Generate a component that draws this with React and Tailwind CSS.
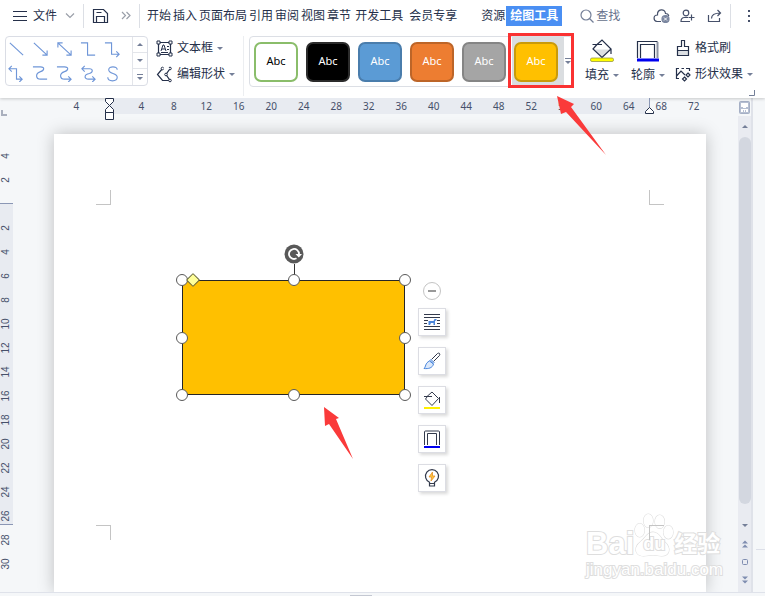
import clsx from 'clsx';

const mainTabs = ['开始', '插入', '页面布局', '引用', '审阅', '视图', '章节'];
const horizontalMarks = [4, '', 4, 8, 12, 16, 20, 24, 28, 32, 36, 40, 44, 48, 52, 56, 60, 64, 68, 72];
const verticalMarks = [4, 2, '', 2, 4, 6, 8, 10, 12, 14, 16, 18, 20, 22, 24, 26, 28, 30];

const swatches = [
  { name: 'green outline', style: 'bg-white border-[#8abd6a] text-black' },
  { name: 'black', style: 'bg-black border-[#2b2b2b] text-white' },
  { name: 'blue', style: 'bg-[#5b9bd5] border-[#4a7dac] text-white' },
  { name: 'orange', style: 'bg-[#ed7d31] border-[#bd6528] text-white' },
  { name: 'gray', style: 'bg-[#a5a5a5] border-[#858585] text-white' },
  { name: 'gold', style: 'bg-[#ffc000] border-[#c99a0a] text-white', selected: true },
];

const connectors = [
  { name: 'line', d: 'M2 2l14 13' },
  { name: 'arrow', d: 'M2 2l14 13M16 10v5h-5' },
  { name: 'double arrow', d: 'M2 2l14 13M16 10v5h-5M2 7V2h5' },
  { name: 'elbow', d: 'M1 2h7v13h8' },
  { name: 'elbow arrow', d: 'M1 2h7v12h8M13 11l3 3-3 3' },
  { name: 'elbow double arrow', d: 'M1 4h8v11h6M12 12l3 3-3 3M4 1L1 4l3 3' },
  { name: 'curve', d: 'M1 2h8c5 0 4 4 0 5-6 2-5 8 0 8h7' },
  { name: 'curve arrow', d: 'M1 2h8c5 0 4 4 0 5-6 2-5 8 0 8h7M13 12l3 3-3 3' },
  { name: 'curve double arrow', d: 'M2 4h8c4 0 4 4 0 5-6 1-6 6-1 6h7M13 12l3 3-3 3M5 1L2 4l3 3' },
  { name: 'freeform', d: 'M14 5c0-4-9-4-9 0 0 5 9 3 9 8 0 5-10 5-10 0' },
];

function Icon({ className, viewBox, children }) {
  return (
    <svg
      viewBox={viewBox}
      className={clsx('shrink-0', className)}
      fill="none"
      stroke="currentColor"
      strokeWidth="1.2"
      aria-hidden="true"
    >
      {children}
    </svg>
  );
}

function Caret({ up, bar }) {
  return (
    <svg viewBox="0 0 6 7" className="h-[7px] w-[6px] shrink-0" fill="#747f98" aria-hidden="true">
      {bar && <path d="M0 0h6v1H0z" />}
      <path d={up ? 'M0 5h6L3 2z' : bar ? 'M0 3h6L3 6z' : 'M0 2h6L3 5z'} />
    </svg>
  );
}

function Separator() {
  return <div className="h-6 w-px shrink-0 bg-[#dcdfe5]" />;
}

function MenuBar() {
  return (
    <header className="flex h-[31px] items-center whitespace-nowrap pl-3">
      <button type="button" className="flex items-center gap-1.5">
        <Icon viewBox="0 0 15 12" className="h-3 w-[15px]">
          <path d="M1 1.5h14M1 6.5h14M1 10.5h14" strokeWidth="1" />
        </Icon>
        文件
        <Icon viewBox="0 0 10 6" className="ml-0.5 h-[6px] w-[10px] text-[#9a9fa9]">
          <path d="M1 .5l4 4 4-4" />
        </Icon>
      </button>
      <div className="ml-2 flex items-center gap-2">
        <Separator />
        <button type="button" aria-label="save">
          <Icon viewBox="0 0 17 16" className="h-4 w-[17px]">
            <path d="M1.500 1.500h10l4 4v9h-14zM4.500 14.500v-6h8v6M4.500 4.500h5" />
          </Icon>
        </button>
        <button type="button" aria-label="more" className="ml-1">
          <Icon viewBox="0 0 10 9" className="h-[9px] w-[10px] text-[#9a9fa9]">
            <path d="M1 1l3.500 3.500L1 8M5.500 1L9 4.500 5.500 8" />
          </Icon>
        </button>
        <Separator />
      </div>
      <nav className="ml-[7px] flex items-center">
        <div className="flex gap-0.5">
          {mainTabs.map((tab) => (
            <button key={tab} type="button">{tab}</button>
          ))}
        </div>
        <button type="button" className="ml-1">开发工具</button>
        <button type="button" className="ml-1.5">会员专享</button>
        <button type="button" className="ml-6">资源</button>
        <button type="button" className="ml-px h-5 bg-[#4a8ff3] px-1 font-bold text-white">绘图工具</button>
      </nav>
      <label className="ml-[18px] flex items-center gap-0.5 text-[#747f98]">
        <Icon viewBox="0 0 14 14" className="size-[14px]">
          <circle cx="6" cy="6" r="5" />
          <path d="M9.500 9.500l4 4" />
        </Icon>
        <input
          type="text"
          placeholder="查找"
          aria-label="查找"
          className="w-7 bg-transparent outline-none placeholder:text-[#66718b]"
        />
      </label>
      <div className="ml-auto flex items-center pr-3.5 text-[#46506a]">
        <button type="button" aria-label="cloud">
          <Icon viewBox="0 0 17 15" className="h-[15px] w-[17px]">
            <path d="M8 13.500H4C0 13 0 7 4.500 7 4 1 12 0 12.500 5.500c2 0 3 1 3.300 2.500" />
            <circle cx="12.500" cy="11" r="3.500" fill="#7c87a0" stroke="#7c87a0" />
            <path d="M11 9.500l3 3m0-3l-3 3" stroke="#fff" strokeWidth="1" />
          </Icon>
        </button>
        <button type="button" aria-label="add user" className="ml-2.5">
          <Icon viewBox="0 0 15 14" className="h-[14px] w-[15px]">
            <circle cx="6" cy="4" r="2.800" />
            <path d="M8 8.500H4.500C2 8.500 1 10 1 12.500h9M11.500 5.500v6M8.500 8.500h6" />
          </Icon>
        </button>
        <button type="button" aria-label="share" className="ml-3">
          <Icon viewBox="0 0 15 14" className="h-[14px] w-[15px]">
            <path d="M1.500 6v6.500h11V9M4.500 9.500c0-4 3-5.500 9-5.500M10.500 1l3 3-3 3" />
          </Icon>
        </button>
        <div className="ml-2 flex items-center gap-4">
          <Separator />
          <button type="button" aria-label="options">
            <svg viewBox="0 0 4 13" className="h-[13px] w-1" fill="currentColor">
              <path d="M1 1h2v2H1zM1 6h2v2H1zM1 11h2v2H1z" />
            </svg>
          </button>
        </div>
      </div>
    </header>
  );
}

function BucketIcon({ className }) {
  return (
    <Icon viewBox="0 0 24 24" className={className}>
      <path d="M4 10.500h16l-8 8z" fill="#dcdfe3" stroke="none" />
      <path d="M2.500 5.500H12M6.500 6l5.500-5 9 9-9 8.500-9-8.500 3.500-4M21 10v5" />
      <rect x=".5" y="19" width="23" height="3.500" rx="1.500" fill="#ffff00" stroke="#8a8640" strokeWidth=".7" />
    </Icon>
  );
}

function OutlineIcon({ className }) {
  return (
    <Icon viewBox="0 0 24 24" className={className}>
      <path d="M1.500 19V2.500h20" />
      <path d="M21.500 3v16" stroke="#8c93a2" strokeWidth="2" />
      <path d="M4.500 19V5.500h14V19" />
      <path d="M1 21h22" stroke="#0000f0" strokeWidth="3" />
    </Icon>
  );
}

function ConnectorGallery() {
  return (
    <div className="flex h-[50px] rounded-sm border border-[#dadde5]">
      <div className="grid grid-cols-5">
        {connectors.map((c) => (
          <button key={c.name} type="button" aria-label={c.name} className="flex size-6 items-center pl-0.5 text-[#6f96d8]">
            <Icon viewBox="0 0 18 18" className="size-[17px]">
              <path d={c.d} />
            </Icon>
          </button>
        ))}
      </div>
      <div className="ml-1.5 grid w-[15px] grid-rows-3 divide-y divide-[#e3e5ea] border-l border-[#e3e5ea]">
        <button type="button" aria-label="up" className="flex items-center justify-center"><Caret up /></button>
        <button type="button" aria-label="down" className="flex items-center justify-center"><Caret /></button>
        <button type="button" aria-label="expand" className="flex items-center justify-center"><Caret bar /></button>
      </div>
    </div>
  );
}

function StyleGallery() {
  return (
    <div className="relative flex h-[51px] items-center rounded-sm border border-[#dcdfe5] pl-0.5">
      {swatches.map((s) => (
        <div key={s.name} className={clsx('flex h-full items-center pr-[5px] pl-0.5', s.selected && 'bg-[#dadde0]')}>
          <button
            type="button"
            aria-label={s.name}
            className={clsx('mr-px h-10 w-11 rounded-[7px] border-2 font-["Noto_Sans",sans-serif] text-[11px]', s.style)}
          >
            Abc
          </button>
        </div>
      ))}
      <button type="button" aria-label="more styles" className="flex w-2 justify-center"><Caret bar /></button>
      {/* highlight frame around the selected style */}
      <div className="absolute -top-1 -right-0.5 h-[55px] w-[66px] border-[3px] border-[#fa3232]" />
    </div>
  );
}

function Ribbon() {
  return (
    <div className="relative flex h-[67px] items-start whitespace-nowrap pt-[5px] pl-[5px]">
      <ConnectorGallery />
      <div className="ml-2 flex flex-col gap-0.5">
        <button type="button" className="flex h-6 items-center gap-1">
          <Icon viewBox="0 0 17 17" className="size-[17px]">
            <path d="M2.500 2.500h12v12h-12z" />
            <path d="M1 1h3v3H1zM13 1h3v3h-3zM1 13h3v3H1zM13 13h3v3h-3z" fill="#fff" strokeWidth="1" />
            <path d="M5 11l2-6h1l2 6M6 9h3M11 6.500h2M11 9.500h2M5 12.500h7" strokeWidth="1" />
          </Icon>
          文本框
          <Caret />
        </button>
        <button type="button" className="flex h-6 items-center gap-1">
          <Icon viewBox="0 0 17 17" className="size-[17px]">
            <path d="M6.500 2.500L1.500 8.500l5 6H14L10 8.500l4-6z" />
            <circle cx="6.500" cy="2.500" r="1.300" fill="#fff" strokeWidth="1" />
            <circle cx="14" cy="2.500" r="1.300" fill="#fff" strokeWidth="1" />
            <circle cx="14" cy="14.500" r="1.300" fill="#fff" strokeWidth="1" />
            <circle cx="10" cy="8.500" r="1.300" fill="#fff" strokeWidth="1" />
            <path d="M7.500 2.500H13" stroke="#fff" strokeWidth="2" />
          </Icon>
          编辑形状
          <Caret />
        </button>
      </div>
      <div className="ml-2 h-[60px] w-px bg-[#eceef1]" />
      <div className="ml-[5px]"><StyleGallery /></div>
      <div className="ml-3 flex gap-3 pt-[3px]">
        <button type="button" className="flex flex-col items-center gap-1">
          <BucketIcon className="size-6" />
          <span className="flex items-center gap-1">填充<Caret /></span>
        </button>
        <button type="button" className="flex flex-col items-center gap-1">
          <OutlineIcon className="size-6" />
          <span className="flex items-center gap-1">轮廓<Caret /></span>
        </button>
      </div>
      <div className="ml-2.5 flex flex-col gap-0.5">
        <button type="button" className="flex h-6 items-center gap-1">
          <Icon viewBox="0 0 16 18" className="h-[18px] w-4">
            <path d="M3 11h10v5H3z" fill="#dcdfe3" stroke="none" />
            <path d="M6.500 7.500v-6h3v6h4v9h-11v-9zM2.500 11.500h11" />
          </Icon>
          格式刷
        </button>
        <button type="button" className="flex h-6 items-center gap-1">
          <Icon viewBox="0 0 16 16" className="size-4">
            <path d="M4 2.500H1.500v10H4M11 2.500h3.500V5M1.500 10l4.500-5 4 4M6.500 2.500h2.500" />
            <path d="M13 7l2 2-2 2-2-2zM9.500 11l2 2-2 2-2-2z" fill="#fff" />
          </Icon>
          形状效果
          <Caret />
        </button>
      </div>
      <svg viewBox="0 0 6 6" className="absolute right-2.5 bottom-0.5 size-[6px]" fill="none" stroke="#747f98" aria-hidden="true">
        <path d="M5.500 0v5.500H0" />
      </svg>
    </div>
  );
}

function HorizontalRuler() {
  return (
    <div className="relative h-4 pl-[60px]">
      <div className="absolute inset-y-0 left-[109px] w-[541px] border-r border-[#8b97b5] bg-[#e8ebf1]" />
      <div className="relative grid h-4 w-[650px] grid-cols-20 text-center text-[10px] leading-4 text-[#46506a]">
        {horizontalMarks.map((mark, i) => (
          <span key={i}>{mark}</span>
        ))}
      </div>
      {/* indent markers */}
      <Icon viewBox="0 0 9 22" className="absolute top-0 left-[105px] h-[22px] w-[9px]">
        <path d="M.5.5h8v3l-4 4 4 4v3h-8v-3l4-4-4-4zM.5 14.500h8v7h-8z" fill="#fff" strokeWidth="1" />
      </Icon>
      <Icon viewBox="0 0 9 7" className="absolute top-[9px] left-[645px] h-[7px] w-[9px]">
        <path d="M.5 6.500v-2l4-4 4 4v2z" fill="#fff" strokeWidth="1" />
      </Icon>
    </div>
  );
}

function VerticalRuler() {
  return (
    <div className="relative w-[13px] shrink-0 pt-[30px]">
      <svg viewBox="0 0 6 6" className="absolute -top-1 left-px size-[6px]" fill="none" stroke="#aab0be" strokeWidth="2" aria-hidden="true">
        <path d="M1 0v5h5" />
      </svg>
      <div className="absolute top-[89px] left-0 h-[322px] w-full border-y border-[#8b97b5] bg-[#e8ebf1]" />
      {verticalMarks.map((mark, i) => (
        <div key={i} className="relative flex h-6 w-3 items-center justify-center">
          <span className="-rotate-90 font-['Liberation_Sans',sans-serif] text-[10px] leading-3 text-[#46506a]">{mark}</span>
        </div>
      ))}
    </div>
  );
}

const handles = [
  'left-0 top-0', 'left-1/2 top-0', 'left-full top-0',
  'left-0 top-1/2', 'left-full top-1/2',
  'left-0 top-full', 'left-1/2 top-full', 'left-full top-full',
];

function SelectedShape() {
  return (
    <div className="absolute top-[146px] left-[128px] h-[115px] w-[223px] border border-[#262626] bg-[#ffc000]">
      <div className="absolute -inset-px">
        <div className="absolute -top-4 left-1/2 h-4 w-px bg-[#333]" />
        <svg viewBox="0 0 20 20" className="absolute -top-9 left-1/2 size-5 -translate-x-1/2" fill="none" aria-hidden="true">
          <circle cx="10" cy="10" r="9.500" fill="#595959" />
          <path d="M12.500 14.300a5 5 0 1 1 2.500-4.300" stroke="#fff" strokeWidth="1.800" />
          <path d="M11.500 10h6.500l-3.200 3.500z" fill="#fff" />
        </svg>
        {handles.map((pos) => (
          <span
            key={pos}
            className={clsx('absolute size-3 -translate-x-1/2 -translate-y-1/2 rounded-full border border-[#595959] bg-white', pos)}
          />
        ))}
        <span className="absolute -top-[5px] left-[6px] size-[10px] rotate-45 rounded-[1px] border border-[#66663a] bg-[#ffff99]" />
      </div>
    </div>
  );
}

function FloatButton({ label, children }) {
  return (
    <button
      type="button"
      aria-label={label}
      className="flex size-7 items-center justify-center border border-[#dcdde3] bg-white shadow-[2px_2px_3px_#00000026]"
    >
      {children}
    </button>
  );
}

function FloatingToolbar() {
  return (
    <div className="absolute top-[148px] left-[364px] flex flex-col items-center gap-2 text-[#333a4c]">
      <button type="button" aria-label="collapse" className="flex size-[18px] items-center justify-center rounded-full border border-[#c4c4c4] bg-white">
        <span className="h-0.5 w-2 bg-[#999]" />
      </button>
      <div className="flex flex-col gap-[11px]">
        <FloatButton label="wrap text">
          <Icon viewBox="0 0 18 18" className="size-[18px]">
            <path d="M1 1.500h16M1 4.500h16M1 7.500h4M1 10.500h3M14 7.500h3M14 10.500h3M1 13.500h16M1 16.500h16" strokeWidth="1" />
            <path d="M5.500 8h5l1-2h1.500l1 1-2 1v4h-1.500v-2H8l-1 2H5.500z" fill="#4a86dc" stroke="none" />
          </Icon>
        </FloatButton>
        <FloatButton label="style brush">
          <Icon viewBox="0 0 18 18" className="size-[18px]">
            <path d="M8.500 7.500l6-6c1.500-1 3 0 2 2l-6 6" strokeWidth="1" />
            <path d="M6.500 9l4 3c-1 4-5 5-9.500 4.500 2-1.500 1-5.500 5.500-7.500zM8 7.500l3 3-1 1-3-3z" stroke="#4a86dc" fill="#dbe8fa" strokeWidth="1" />
          </Icon>
        </FloatButton>
        <FloatButton label="fill">
          <Icon viewBox="0 0 18 18" className="size-[18px]">
            <path d="M1 5.500h8M4 5.500L9 1l6.500 6.500L9 14.500 2.500 8 4 6M16.500 6v6" strokeWidth="1" />
            <path d="M1 17h16" stroke="#fff000" strokeWidth="2" />
          </Icon>
        </FloatButton>
        <FloatButton label="outline">
          <Icon viewBox="0 0 18 18" className="size-[18px]">
            <path d="M1.500 15V2q0-1 1-1h13q1 0 1 1v13M4.500 15V3.500h9V15" strokeWidth="1" />
            <path d="M1 17h16" stroke="#0000f0" strokeWidth="2" />
          </Icon>
        </FloatButton>
        <FloatButton label="suggestions">
          <Icon viewBox="0 0 18 18" className="size-[18px]">
            <path d="M6.500 14v-.800a6.500 6.500 0 1 1 5 0v.800M6.500 14.500h5v2.500h-5z" />
            <path d="M9.500 3L6 8h2.500L8 12l4-5H9.500z" fill="#ffc640" stroke="#e69125" strokeWidth=".8" />
          </Icon>
        </FloatButton>
      </div>
    </div>
  );
}

function Watermark() {
  return (
    <div className="absolute top-[378px] left-[532px] font-['Liberation_Sans','Noto_Sans_CJK_SC',sans-serif] font-bold whitespace-nowrap text-white [paint-order:stroke] [-webkit-text-stroke:2px_#dedede]">
      <div className="flex h-[46px] items-end">
        <span className="text-[31px] leading-7">Bai</span>
        <div className="relative h-[46px] w-10 shrink-0">
          <svg viewBox="0 0 42 46" className="h-full w-full" fill="#fff" stroke="#dedede" strokeWidth="1.200" aria-hidden="true">
            <ellipse cx="6" cy="18" rx="5" ry="7" />
            <ellipse cx="15" cy="8" rx="5" ry="7" />
            <ellipse cx="27" cy="9" rx="5" ry="7" />
            <ellipse cx="36" cy="20" rx="5" ry="7" />
            <path d="M20 20c6 0 8 6 12 10 8 7 5 15-3 15-4 0-5-1-9-1s-6 1-10 1c-9 0-11-9-3-15 5-4 7-10 13-10z" />
          </svg>
          <span className="absolute inset-x-0 bottom-1 text-center text-[18px] leading-5">du</span>
        </div>
        <span className="text-[23px] leading-7">经验</span>
      </div>
      <div className="text-[17px] leading-6 font-normal">jingyan.baidu.com</div>
    </div>
  );
}

function Paper() {
  return (
    <main className="relative mt-5 mr-8 ml-[41px] flex-1 bg-white shadow-[0_0_16px_#0000003a]">
      {/* margin corners */}
      <div className="absolute top-14 left-[42px] size-[15px] border-r border-b border-[#c4c4c4]" />
      <div className="absolute top-14 right-[42px] size-[15px] border-b border-l border-[#c4c4c4]" />
      <div className="absolute top-[391px] left-[42px] size-[15px] border-t border-r border-[#c4c4c4]" />
      <SelectedShape />
      <FloatingToolbar />
      <Watermark />
      <div className="absolute top-[391px] right-[42px] size-[15px] border-t border-l border-[#c4c4c4]" />
    </main>
  );
}

function Scrollbar() {
  return (
    <div className="flex w-[15px] shrink-0 flex-col items-center border-r-2 border-[#dfe2e9] bg-[#e9ebf1]">
      <div className="flex h-[18px] w-full justify-center bg-[#f5f7f9] pt-[3px]">
        <svg viewBox="0 0 11 13" className="h-[13px] w-[11px]" fill="none" stroke="#a5afc5" aria-hidden="true">
          <rect x=".5" y=".5" width="10" height="12" rx="1" fill="#b6bfd2" />
          <path d="M2 2h7v4H7v1H4V6H2zM2 8h7v3H7V9H6v2H5V9H4v2H2z" fill="#fff" stroke="none" />
        </svg>
      </div>
      <div className="flex h-[21px] items-center"><Caret up /></div>
      <div className="w-3 flex-1 rounded-full bg-[#d3d7e0]" />
      <div className="flex h-[88px] flex-col items-center justify-between pt-[18px] pb-2">
        <Caret />
        <svg viewBox="0 0 6 8" className="h-2 w-[6px]" fill="#7f8db0" aria-hidden="true">
          <path d="M0 3.500h6l-3-3zM0 7.500h6l-3-3z" />
        </svg>
        <svg viewBox="0 0 6 6" className="size-[6px]" fill="none" stroke="#7f8db0" aria-hidden="true">
          <rect x=".5" y=".5" width="5" height="5" rx="1" />
        </svg>
        <svg viewBox="0 0 6 8" className="h-2 w-[6px]" fill="#7f8db0" aria-hidden="true">
          <path d="M0 .5h6l-3 3zM0 4.500h6l-3 3z" />
        </svg>
      </div>
    </div>
  );
}

export default function App() {
  return (
    <div className="relative flex h-screen flex-col overflow-hidden bg-[#f5f7f9] font-['Noto_Sans','Noto_Sans_CJK_SC',sans-serif] text-xs text-[#25304a]">
      <div className="relative bg-white shadow-[0_1px_3px_#00000030]">
        <MenuBar />
        <Ribbon />
      </div>
      <div className="flex min-h-0 flex-1">
        <div className="flex min-w-0 flex-1 flex-col overflow-hidden">
          <HorizontalRuler />
          <div className="flex min-h-0 flex-1">
            <VerticalRuler />
            <Paper />
          </div>
        </div>
        <Scrollbar />
        <aside className="flex w-3 shrink-0 flex-col justify-end pb-[42px] pl-[3px]">
          <div className="h-px bg-[#dcdfe8]" />
        </aside>
      </div>
      <footer className="flex h-1 shrink-0 items-end justify-center border-t border-[#dfe2ea] bg-[#f5f7f9] pr-11">
        <div className="h-px w-[22px] bg-[#c4c8d2]" />
      </footer>
      {/* pointer arrows */}
      <svg viewBox="0 0 50 60" className="absolute top-[96px] left-[557px] h-[60px] w-[50px]" fill="#fa3a3a" aria-hidden="true">
        <path d="M0 0l17 8-3 3 35 48L9 16l-5 2z" />
      </svg>
      <svg viewBox="0 0 30 53" className="absolute top-[407px] left-[324px] h-[53px] w-[30px]" fill="#fa3a3a" aria-hidden="true">
        <path d="M0 0l15 11-3 1 17 40L5 17l-4 2z" />
      </svg>
    </div>
  );
}
